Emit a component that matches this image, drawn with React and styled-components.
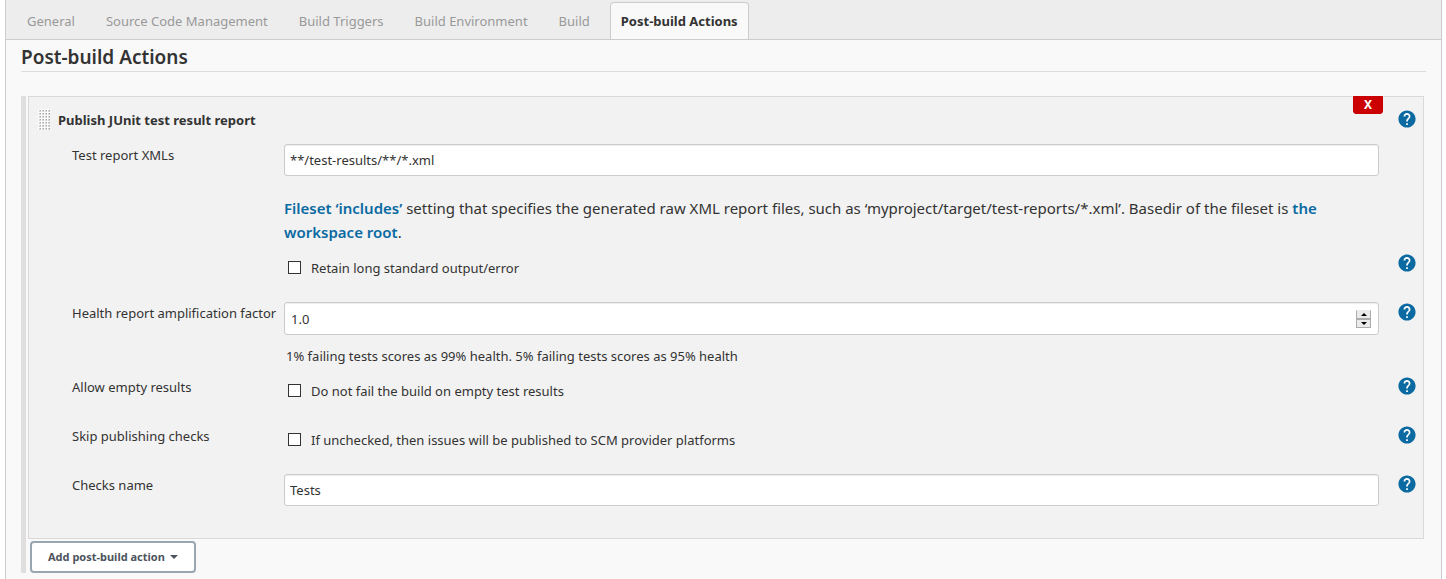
import React from "react";
import styled, { createGlobalStyle, css } from "styled-components";

const GlobalStyle = createGlobalStyle`
  *, *::before, *::after { box-sizing: border-box; }
  body {
    margin: 0;
    background: #fff;
    color: #333;
    font-family: "Noto Sans", "Open Sans", sans-serif;
    font-size: 13px;
    line-height: 22px;
  }
  button, input { font: inherit; color: inherit; }
`;

const Panel = styled.main`
  margin: 0 4px 0 5px;
  min-height: 100vh;
  border: solid #ccc;
  border-width: 0 1px;
  background: #f9f9f9;
`;

const TabBar = styled.nav`
  display: flex;
  gap: 9px;
  height: 40px;
  padding: 2px 10px 0;
  background: #ededed;
  border-bottom: 1px solid #ccc;
`;

const Tab = styled.a`
  padding: 7px 10px 0;
  border: 1px solid transparent;
  border-bottom: 0;
  border-radius: 4px 4px 0 0;
  color: #999;
  text-decoration: none;
  white-space: nowrap;
  ${({ $active }) =>
    $active &&
    css`
      background: #f9f9f9;
      border-color: #ccc;
      color: #333;
      font-weight: 700;
    `}
`;

const Content = styled.div`
  padding: 0 15px;
`;

const Heading = styled.h1`
  margin: 0 0 24px;
  height: 32px;
  padding-top: 2px;
  border-bottom: 1px solid #ddd;
  font-size: 19px;
  font-weight: 600;
  line-height: 30px;
`;

const Steps = styled.section`
  padding-left: 2px;
  padding-right: 2px;
  border-left: 5px solid #dfdfdf;
`;

const Card = styled.div`
  position: relative;
  padding: 0 7px 15px 9px;
  border: 1px solid #d9d9d9;
  background: #f2f2f2;
`;

const CardHeader = styled.header`
  display: flex;
  align-items: flex-start;
  gap: 8px;
  height: 47px;
  padding-top: 12px;
`;

const Title = styled.h2`
  flex: 1;
  margin: 0;
  font-size: 13px;
  font-weight: 700;
  line-height: 22px;
`;

const DeleteButton = styled.button`
  position: absolute;
  top: -1px;
  right: 40px;
  width: 30px;
  height: 18px;
  padding: 0;
  border: 1px solid #c40000;
  border-radius: 0 0 3px 3px;
  background: #c00;
  color: #fff;
  font-size: 12px;
  font-weight: 700;
  line-height: 16px;
`;

const Row = styled.div`
  display: flex;
  align-items: flex-start;
  min-height: 49px;
  padding-left: 34px;
`;

const LabelCell = styled.div`
  flex: 0 0 212px;
  white-space: nowrap;
`;

const Field = styled.div`
  flex: 1;
  min-width: 0;
  padding-bottom: 9px;
`;

const HelpCell = styled.div`
  flex: 0 0 37px;
  padding: 1px 0 0 19px;
`;

const HelpButton = styled.button`
  display: block;
  width: 18px;
  height: 18px;
  padding: 0;
  border: 0;
  background: none;
  svg { display: block; }
`;

const inputBox = css`
  border: 1px solid #ccc;
  border-radius: 3px;
  background: #fff;
  box-shadow: inset 0 1px 1px rgba(0, 0, 0, 0.075);
`;

const TextInput = styled.input`
  ${inputBox}
  display: block;
  width: 100%;
  height: 32px;
  padding: 0 5px;
`;

const NumberBox = styled.div`
  ${inputBox}
  display: flex;
  align-items: center;
  height: 33px;
  padding: 0 7px 0 6px;
`;

const NumberInput = styled.input`
  flex: 1;
  min-width: 0;
  padding: 0;
  border: 0;
  background: none;
  appearance: textfield;
  &::-webkit-inner-spin-button { appearance: none; }
`;

const Spinner = styled.div`
  display: flex;
  flex-direction: column;
  width: 15px;
`;

const SpinButton = styled.button`
  display: grid;
  place-items: center;
  height: 9px;
  padding: 0;
  border: 1px solid #acacac;
  background: #ebebeb;
  &:first-child { border-top-color: #ebebeb; }
  svg { display: block; }
`;

const Description = styled.p`
  margin: 20px 0 0;
  font-size: 15px;
  line-height: 24px;
`;

const DocLink = styled.a`
  color: #0b6aa2;
  font-weight: 600;
  text-decoration: none;
`;

const Note = styled.p`
  margin: 10px 0 0 2px;
`;

const CheckLabel = styled.label`
  display: flex;
  align-items: flex-start;
  gap: 10px;
  padding: 4px 0 0 4px;
`;

const Checkbox = styled.input`
  appearance: none;
  width: 13px;
  height: 13px;
  margin: 4px 0 0;
  border: 1px solid #333;
  background: #fff;
  &:checked { box-shadow: inset 0 0 0 2px #fff; background: #333; }
`;

const AddButton = styled.button`
  display: flex;
  align-items: center;
  gap: 5px;
  height: 32px;
  margin: 2px 0 0 2px;
  padding: 0 16px;
  border: 2px solid #98a6b2;
  border-radius: 4px;
  background: #fff;
  color: #4d545d;
  font-size: 11px;
  font-weight: 700;
`;

function Help({ about }) {
  return (
    <HelpCell>
      <HelpButton type="button" aria-label={`Help for feature: ${about}`}>
        <svg width="18" height="18" viewBox="1.5 1.5 21 21" aria-hidden="true">
          <circle cx="12" cy="12" r="9" fill="#fff" />
          <path
            fill="#0b6aa2"
            d="M12 2C6.48 2 2 6.48 2 12s4.48 10 10 10 10-4.480 10-10S17.520 2 12 2zm1 17h-2v-2h2v2zm2.070-7.750l-.9.920C13.450 12.900 13 13.500 13 15h-2v-.5c0-1.100.450-2.100 1.170-2.830l1.240-1.260c.370-.360.590-.860.590-1.410 0-1.100-.9-2-2-2s-2 .9-2 2H8c0-2.210 1.790-4 4-4s4 1.790 4 4c0 .880-.360 1.680-.930 2.250z"
          />
        </svg>
      </HelpButton>
    </HelpCell>
  );
}

function DragHandle() {
  return (
    <svg width="12" height="21" viewBox="0 0 12 21" aria-hidden="true">
      <defs>
        <pattern id="grip" width="3" height="3" patternUnits="userSpaceOnUse">
          <rect width="3" height="3" fill="#fbfbfb" />
          <rect x="1" y="1" width="2" height="2" fill="#d4d4d4" />
          <rect x="2" y="1" width="1" height="1" fill="#a8a8a8" />
        </pattern>
      </defs>
      <rect width="12" height="21" fill="url(#grip)" />
    </svg>
  );
}

function CheckRow({ id, label, text }) {
  return (
    <Row>
      <LabelCell>{label}</LabelCell>
      <Field>
        <CheckLabel htmlFor={id}>
          <Checkbox id={id} type="checkbox" />
          {text}
        </CheckLabel>
      </Field>
      <Help about={label || text} />
    </Row>
  );
}

const tabs = ["General", "Source Code Management", "Build Triggers", "Build Environment", "Build", "Post-build Actions"];

export default function App() {
  return (
    <>
      <GlobalStyle />
      <Panel>
        <TabBar>
          {tabs.map((name, i) => (
            <Tab key={name} href="#" $active={i === tabs.length - 1}>
              {name}
            </Tab>
          ))}
        </TabBar>
        <Content>
          <Heading>Post-build Actions</Heading>
          <Steps>
            <Card>
              <CardHeader>
                <DragHandle />
                <Title>Publish JUnit test result report</Title>
                <HelpCell as={Help} about="Publish JUnit test result report" />
              </CardHeader>
              <DeleteButton type="button">X</DeleteButton>
              <Row>
                <LabelCell as="label" htmlFor="xmls">Test report XMLs</LabelCell>
                <Field>
                  <TextInput id="xmls" defaultValue="**/test-results/**/*.xml" />
                  <Description>
                    <DocLink href="#">Fileset ‘includes’</DocLink> setting that specifies the generated raw XML report
                    files, such as ‘myproject/target/test-reports/*.xml’. Basedir of the fileset is{" "}
                    <DocLink href="#">the workspace root</DocLink>.
                  </Description>
                </Field>
                <HelpCell />
              </Row>
              <CheckRow id="retain" text="Retain long standard output/error" />
              <Row>
                <LabelCell as="label" htmlFor="factor">Health report amplification factor</LabelCell>
                <Field>
                  <NumberBox>
                    <NumberInput id="factor" type="number" step="0.1" defaultValue="1.0" />
                    <Spinner>
                      <SpinButton type="button" aria-label="Increase">
                        <svg width="6" height="3" viewBox="0 0 6 3"><path d="M0 3 3 0l3 3z" /></svg>
                      </SpinButton>
                      <SpinButton type="button" aria-label="Decrease">
                        <svg width="6" height="3" viewBox="0 0 6 3"><path d="M0 0h6L3 3z" /></svg>
                      </SpinButton>
                    </Spinner>
                  </NumberBox>
                  <Note>1% failing tests scores as 99% health. 5% failing tests scores as 95% health</Note>
                </Field>
                <Help about="Health report amplification factor" />
              </Row>
              <CheckRow id="empty" label="Allow empty results" text="Do not fail the build on empty test results" />
              <CheckRow
                id="skip"
                label="Skip publishing checks"
                text="If unchecked, then issues will be published to SCM provider platforms"
              />
              <Row>
                <LabelCell as="label" htmlFor="name">Checks name</LabelCell>
                <Field>
                  <TextInput id="name" defaultValue="Tests" />
                </Field>
                <Help about="Checks name" />
              </Row>
            </Card>
            <AddButton type="button">
              Add post-build action
              <svg width="8" height="4" viewBox="0 0 8 4" fill="currentColor" aria-hidden="true"><path d="M0 0h8L4 4z" /></svg>
            </AddButton>
          </Steps>
        </Content>
      </Panel>
    </>
  );
}
